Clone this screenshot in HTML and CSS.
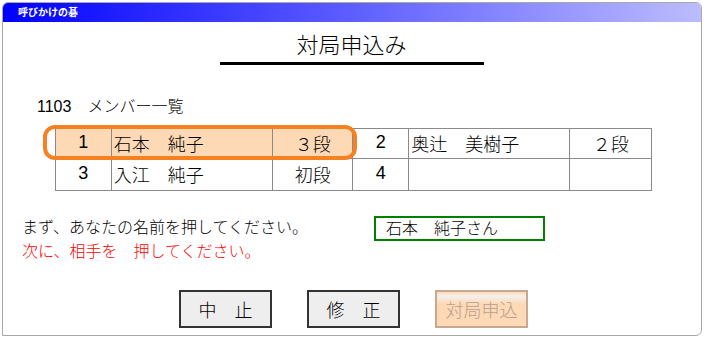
FILE: index.html
```html
<!DOCTYPE html>
<html lang="ja">
<head>
  <meta charset="UTF-8">
  <title>呼びかけの碁</title>
  <link rel="stylesheet" href="styles.css">
</head>
<body>
  <div class="window">
    <div class="titlebar">呼びかけの碁</div>

    <div class="content">
      <h1 class="heading">対局申込み</h1>

      <p class="group"><span class="lat">1103</span>　メンバー一覧</p>

      <div class="table-wrap">
        <table class="members">
          <tr>
            <td class="num sel">1</td>
            <td class="name sel">石本　純子</td>
            <td class="rank sel">３段</td>
            <td class="num">2</td>
            <td class="name">奥辻　美樹子</td>
            <td class="rank">２段</td>
          </tr>
          <tr>
            <td class="num">3</td>
            <td class="name">入江　純子</td>
            <td class="rank">初段</td>
            <td class="num">4</td>
            <td class="name"></td>
            <td class="rank"></td>
          </tr>
        </table>
        <div class="select-ring"></div>
      </div>

      <div class="messages">
        <div class="lines">
          <p>まず、あなたの名前を押してください。</p>
          <p class="red">次に、相手を　押してください。</p>
        </div>
        <div class="me">石本　純子さん</div>
      </div>

      <div class="buttons">
        <button class="btn">中　止</button>
        <button class="btn">修　正</button>
        <button class="btn off" disabled>対局申込</button>
      </div>
    </div>
  </div>
</body>
</html>
```

FILE: styles.css
```css
/* page */
body {
  margin: 2px;
  font-family: "Liberation Sans", "Noto Sans CJK JP", sans-serif;
  font-weight: 300;
  color: #000;
  background: #fff;
}

.lat,
.members .num {
  font-weight: 400;
}

/* window frame */
.window {
  width: 698px;
  height: 332px;
  border: 1px solid #a8a8a8;
  border-radius: 6px;
  border-bottom-left-radius: 0;
  overflow: hidden;
}

.titlebar {
  height: 19px;
  line-height: 19px;
  padding-left: 15px;
  font-size: 10px;
  font-weight: bold;
  color: #fff;
  background: linear-gradient(to right, #0000ff, #bcbcff);
}

.content {
  padding: 0 0 0 19px;
}

/* heading */
.heading {
  width: 264px;
  margin: 9px auto 0;
  padding-bottom: 1px;
  border-bottom: 3px solid #000;
  font-size: 22px;
  font-weight: 300;
  line-height: 30px;
  text-align: center;
  position: relative;
  left: -10px;
}

.group {
  margin: 32px 0 0 15px;
  font-size: 16px;
  line-height: 20px;
}

/* member table */
.table-wrap {
  position: relative;
  margin: 11px 0 0 33px;
  width: 597px;
}

.members {
  border-collapse: collapse;
  border: 1px solid #333;
  font-size: 18px;
}

.members td {
  border: 1px solid #8a8a8a;
  padding: 0 2px 2px;
  height: 29px;
}

.members tr:first-child td {
  height: 27px;
}

.members .num {
  width: 51px;
  text-align: center;
}

.members .name {
  width: 157px;
  text-align: left;
}

.members .rank {
  width: 76px;
  text-align: center;
}

.members tr td:last-child {
  width: 77px;
}

.members .sel {
  background: #fdd9b5;
}

.select-ring {
  position: absolute;
  left: -12px;
  top: -3px;
  width: 306px;
  height: 27px;
  border: 4px solid #f68121;
  border-radius: 12px;
}

/* messages */
.messages {
  display: flex;
  margin-top: 24px;
}

.lines {
  width: 352px;
  padding-top: 1px;
}

.lines p {
  margin: 0;
  font-size: 16px;
  line-height: 24px;
}

.lines .red {
  color: #ff0000;
}

.me {
  margin-top: 1px;
  width: 157px;
  height: 21px;
  padding-left: 10px;
  border: 2px solid #008000;
  font-size: 16px;
  line-height: 21px;
}

/* buttons */
.buttons {
  display: flex;
  gap: 35px;
  margin: 26px 0 0 157px;
}

.btn {
  width: 93px;
  height: 38px;
  border: 2px solid #333;
  background: #eeeeee;
  font-family: "Noto Sans CJK JP", sans-serif;
  font-weight: 300;
  font-size: 18px;
  color: #000;
  padding: 0;
}

.btn.off {
  border-color: #c8a890;
  background: linear-gradient(#fdd9b5, #f4f0ee 12%, #fdd9b5 35%);
  color: #b8a090;
}
```
